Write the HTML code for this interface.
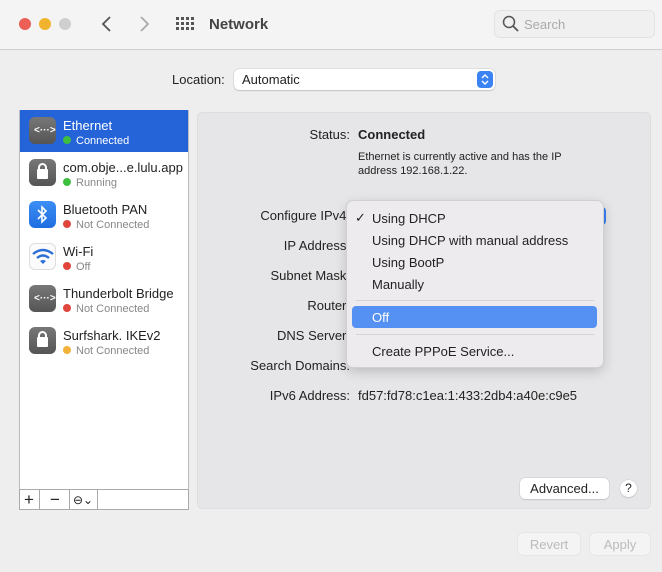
<!DOCTYPE html>
<html><head><style>
*{margin:0;padding:0;box-sizing:border-box}
body{width:662px;height:572px;background:#efeeef;font-family:"Liberation Sans",sans-serif;font-size:13px;color:#222;position:relative;overflow:hidden}
.a{position:absolute}
.tb{left:0;top:0;width:662px;height:50px;background:#f5f4f5;border-bottom:1px solid #cfcfcf}
.dot{width:12px;height:12px;border-radius:50%;top:18px}
.lbl{right:312px;text-align:right;white-space:nowrap}
.val{left:358px;white-space:nowrap}
.row{left:20px;width:168px;height:42px}
.ic{left:9px;top:7px;width:27px;height:27px;border-radius:6px;background:linear-gradient(#777,#555)}
.nm{left:43px;top:8px;font-size:13px}
.st{left:43px;top:25px;font-size:11px;color:#888}
.sd{display:inline-block;width:8px;height:8px;border-radius:50%;margin-right:5px}
.mi{left:25px;font-size:13px;color:#222}
.btn{background:#fff;border-radius:5px;box-shadow:0 0 0 0.5px #ccc,0 1px 1px #bbb;font-size:13px;text-align:center}
</style></head><body>
<div class="a tb"></div>
<div class="a dot" style="left:19px;background:#ec5f56"></div>
<div class="a dot" style="left:39px;background:#f1b22d"></div>
<div class="a dot" style="left:59px;background:#cfcfcf"></div>
<svg class="a" style="left:100px;top:15px" width="14" height="18"><path d="M10 2 L3 9 L10 16" stroke="#555" stroke-width="1.8" fill="none"/></svg>
<svg class="a" style="left:137px;top:15px" width="14" height="18"><path d="M4 2 L11 9 L4 16" stroke="#aaa" stroke-width="1.8" fill="none"/></svg>
<svg class="a" style="left:175px;top:16px" width="20" height="16"><g fill="#555"><rect x="1" y="1" width="3" height="3"/><rect x="6" y="1" width="3" height="3"/><rect x="11" y="1" width="3" height="3"/><rect x="16" y="1" width="3" height="3"/><rect x="1" y="6" width="3" height="3"/><rect x="6" y="6" width="3" height="3"/><rect x="11" y="6" width="3" height="3"/><rect x="16" y="6" width="3" height="3"/><rect x="1" y="11" width="3" height="3"/><rect x="6" y="11" width="3" height="3"/><rect x="11" y="11" width="3" height="3"/><rect x="16" y="11" width="3" height="3"/></g></svg>
<div class="a" style="left:209px;top:16px;font-size:15px;font-weight:bold;color:#444">Network</div>
<div class="a" style="left:494px;top:10px;width:161px;height:28px;border-radius:6px;background:#f1f0f1;border:1px solid #e2e2e2"></div>
<svg class="a" style="left:502px;top:15px" width="18" height="18"><circle cx="7" cy="7" r="5.5" stroke="#555" stroke-width="1.5" fill="none"/><path d="M11 11 L16 16" stroke="#555" stroke-width="1.8"/></svg>
<div class="a" style="left:524px;top:17px;font-size:13px;color:#aaa">Search</div>
<div class="a" style="left:172px;top:72px">Location:</div>
<div class="a btn" style="left:234px;top:69px;width:261px;height:21px;text-align:left;padding:3px 0 0 8px">Automatic</div>
<div class="a" style="left:477px;top:71px;width:16px;height:17px;border-radius:4px;background:#3b82f3"></div>
<svg class="a" style="left:477px;top:71px" width="16" height="17"><path d="M5 7 L8 4 L11 7 M5 10 L8 13 L11 10" stroke="#fff" stroke-width="1.4" fill="none"/></svg>
<div class="a" style="left:19px;top:110px;width:170px;height:400px;background:#fff;border:1px solid #bdbdbd"></div>
<div class="a row" style="top:110px;background:#2563d8"></div>
<div class="a row" style="top:110px"><div class="a ic"></div><div class="a" style="left:14px;top:15px;color:#fff;font-size:10px;font-weight:bold">&lt;···&gt;</div><div class="a nm" style="color:#fff">Ethernet</div><div class="a st" style="color:#fff"><span class="sd" style="background:#3fbf3f"></span>Connected</div></div>
<div class="a row" style="top:152px"><div class="a ic"></div><div class="a" style="left:17px;top:17px;width:11px;height:10px;background:#fff;border-radius:1px"></div><div class="a" style="left:18px;top:11px;width:9px;height:10px;border:2px solid #fff;border-radius:5px 5px 0 0"></div><div class="a nm">com.obje...e.lulu.app</div><div class="a st"><span class="sd" style="background:#3fbf3f"></span>Running</div></div>
<div class="a row" style="top:194px"><div class="a ic" style="background:linear-gradient(#3d8ef5,#1f6de0)"></div><svg class="a" style="left:15px;top:11px" width="14" height="20"><path d="M3 5 L11 13 L7 17 L7 2 L11 6 L3 14" stroke="#fff" stroke-width="1.6" fill="none"/></svg><div class="a nm">Bluetooth PAN</div><div class="a st"><span class="sd" style="background:#e0463c"></span>Not Connected</div></div>
<div class="a row" style="top:236px"><div class="a ic" style="background:#fbfbfb;border:1px solid #ddd"></div><svg class="a" style="left:11px;top:12px" width="24" height="18"><path d="M2 6 Q12 -2 22 6" stroke="#2c6ed8" stroke-width="2.4" fill="none"/><path d="M6 10 Q12 5 18 10" stroke="#2c6ed8" stroke-width="2.4" fill="none"/><path d="M9 13 Q12 11 15 13 L12 16Z" fill="#2c6ed8"/></svg><div class="a nm">Wi-Fi</div><div class="a st"><span class="sd" style="background:#e0463c"></span>Off</div></div>
<div class="a row" style="top:278px"><div class="a ic"></div><div class="a" style="left:14px;top:15px;color:#fff;font-size:10px;font-weight:bold">&lt;···&gt;</div><div class="a nm">Thunderbolt Bridge</div><div class="a st"><span class="sd" style="background:#e0463c"></span>Not Connected</div></div>
<div class="a row" style="top:320px"><div class="a ic"></div><div class="a" style="left:17px;top:17px;width:11px;height:10px;background:#fff;border-radius:1px"></div><div class="a" style="left:18px;top:11px;width:9px;height:10px;border:2px solid #fff;border-radius:5px 5px 0 0"></div><div class="a nm">Surfshark. IKEv2</div><div class="a st"><span class="sd" style="background:#f2b13a"></span>Not Connected</div></div>
<div class="a" style="left:19px;top:489px;width:170px;height:21px;border:1px solid #aaa;background:#fff"></div>
<div class="a" style="left:39px;top:489px;width:1px;height:21px;background:#aaa"></div>
<div class="a" style="left:69px;top:489px;width:1px;height:21px;background:#aaa"></div>
<div class="a" style="left:97px;top:489px;width:1px;height:21px;background:#aaa"></div>
<div class="a" style="left:24px;top:490px;font-size:17px;line-height:20px">+</div>
<div class="a" style="left:50px;top:490px;font-size:17px;line-height:20px">−</div>
<div class="a" style="left:73px;top:493px;font-size:12px">⊖⌄</div>
<div class="a" style="left:197px;top:112px;width:454px;height:397px;background:#e6e5e7;border-radius:5px;border:1px solid #dedde0"></div>
<div class="a lbl" style="top:127px">Status:</div>
<div class="a val" style="top:127px;font-weight:bold">Connected</div>
<div class="a val" style="top:150px;font-size:11px;line-height:14px">Ethernet is currently active and has the IP<br>address 192.168.1.22.</div>
<div class="a lbl" style="top:208px">Configure IPv4:</div>
<div class="a" style="left:590px;top:207px;width:16px;height:18px;border-radius:4px;background:#3b82f3"></div>
<div class="a lbl" style="top:238px">IP Address:</div>
<div class="a lbl" style="top:268px">Subnet Mask:</div>
<div class="a lbl" style="top:298px">Router:</div>
<div class="a lbl" style="top:328px">DNS Server:</div>
<div class="a lbl" style="top:358px">Search Domains:</div>
<div class="a lbl" style="top:388px">IPv6 Address:</div>
<div class="a val" style="top:388px">fd57:fd78:c1ea:1:433:2db4:a40e:c9e5</div>
<div class="a" style="left:347px;top:201px;width:256px;height:166px;background:#edebee;border-radius:6px;box-shadow:0 0 0 1px #d0cfd2,0 4px 12px rgba(0,0,0,.2)">
<div class="a" style="left:8px;top:9px">✓</div>
<div class="a mi" style="top:10px">Using DHCP</div>
<div class="a mi" style="top:32px">Using DHCP with manual address</div>
<div class="a mi" style="top:54px">Using BootP</div>
<div class="a mi" style="top:76px">Manually</div>
<div class="a" style="left:9px;top:99px;width:238px;height:1px;background:#d4d3d6"></div>
<div class="a" style="left:5px;top:105px;width:245px;height:22px;background:#5591f2;border-radius:4px"></div>
<div class="a mi" style="top:109px;color:#fff">Off</div>
<div class="a" style="left:9px;top:133px;width:238px;height:1px;background:#d4d3d6"></div>
<div class="a mi" style="top:143px">Create PPPoE Service...</div>
</div>
<div class="a btn" style="left:520px;top:478px;width:89px;height:21px;padding-top:3px">Advanced...</div>
<div class="a btn" style="left:620px;top:480px;width:17px;height:17px;border-radius:50%;font-size:12px;padding-top:1px">?</div>
<div class="a btn" style="left:518px;top:533px;width:62px;height:22px;padding-top:4px;color:#bbb;background:#f4f4f5;box-shadow:0 0 0 .5px #ddd">Revert</div>
<div class="a btn" style="left:590px;top:533px;width:60px;height:22px;padding-top:4px;color:#bbb;background:#f4f4f5;box-shadow:0 0 0 .5px #ddd">Apply</div>
</body></html>
